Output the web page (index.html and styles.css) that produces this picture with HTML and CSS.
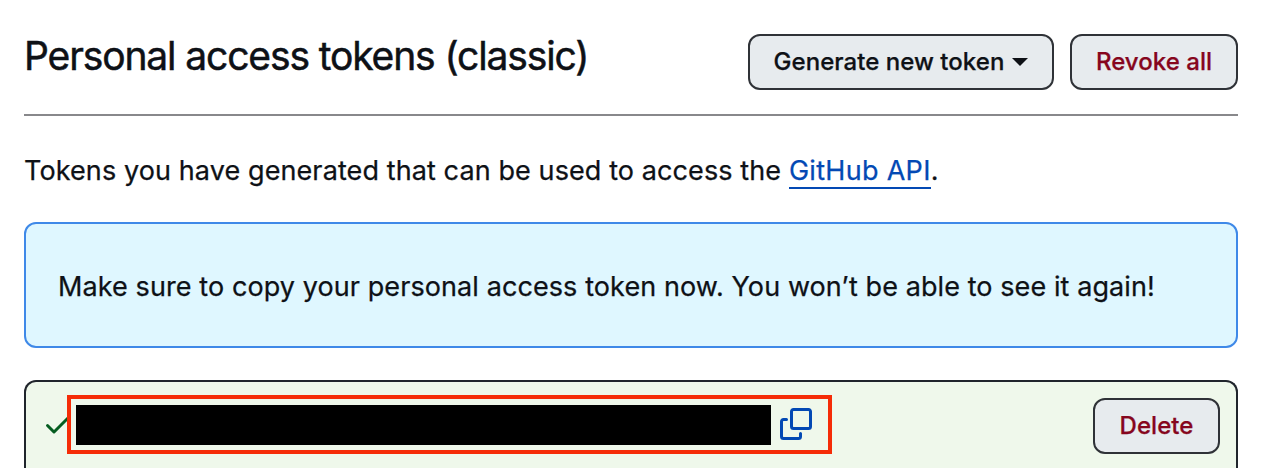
FILE: index.html
```html
<!DOCTYPE html>
<html lang="en">
<head>
<meta charset="utf-8">
<title>Personal access tokens (classic)</title>
<link rel="stylesheet" href="styles.css">
</head>
<body>
<main class="page">
  <header class="subhead">
    <h1 class="title"><span>Personal access tokens (classic)</span></h1>
    <div class="actions">
      <button class="btn btn-generate"><span>Generate new token</span><i class="caret"></i></button>
      <button class="btn btn-danger btn-revoke"><span>Revoke all</span></button>
    </div>
  </header>
  <p class="intro"><span>Tokens you have generated that can be used to access the </span><a class="link" href="#">GitHub API</a><span>.</span></p>
  <div class="flash"><span>Make sure to copy your personal access token now. You won’t be able to see it again!</span></div>
  <section class="token-row">
    <svg class="check" viewBox="0 0 16 16" width="32" height="32"><path d="M13.78 4.22a.75.75 0 0 1 0 1.06l-7.25 7.25a.75.75 0 0 1-1.06 0L2.22 9.28a.751.751 0 0 1 .018-1.042.751.751 0 0 1 1.042-.018L6 10.94l6.72-6.72a.75.75 0 0 1 1.06 0Z"/></svg>
    <div class="highlight">
      <div class="redacted"></div>
      <svg class="copy" viewBox="0 0 16 16" width="32" height="32"><path d="M0 6.75C0 5.784.784 5 1.75 5h1.5a.75.75 0 0 1 0 1.5h-1.5a.25.25 0 0 0-.25.25v7.5c0 .138.112.25.25.25h7.5a.25.25 0 0 0 .25-.25v-1.5a.75.75 0 0 1 1.5 0v1.5A1.75 1.75 0 0 1 9.25 16h-7.5A1.75 1.75 0 0 1 0 14.25Z"/><path d="M5 1.75C5 .784 5.784 0 6.75 0h7.5C15.216 0 16 .784 16 1.75v7.5A1.75 1.75 0 0 1 14.25 11h-7.5A1.75 1.75 0 0 1 5 9.25Zm1.75-.25a.25.25 0 0 0-.25.25v7.5c0 .138.112.25.25.25h7.5a.25.25 0 0 0 .25-.25v-7.5a.25.25 0 0 0-.25-.25Z"/></svg>
    </div>
    <button class="btn btn-danger btn-delete"><span>Delete</span></button>
  </section>
</main>
</body>
</html>
```
FILE: styles.css
```css
* { box-sizing: border-box; }
body {
  margin: 0;
  background: #fff;
  color: #0e1116;
  font-family: Inter, "Liberation Sans", sans-serif;
}
.page { padding: 34px 24px 0; }
.subhead {
  display: flex;
  justify-content: space-between;
  align-items: flex-start;
  height: 82px;
  border-bottom: 2px solid #88888b;
}
.title {
  margin: 0;
  font-size: 39px;
  line-height: 44px;
  font-weight: 400;
  letter-spacing: -1.13px;
  white-space: nowrap;
  -webkit-text-stroke: 0.5px;
}
.actions { display: flex; gap: 16px; }
.btn {
  display: flex;
  align-items: center;
  justify-content: center;
  gap: 8px;
  height: 56px;
  padding: 0;
  border: 2px solid #2f3237;
  border-radius: 12px;
  background: #e7ebee;
  color: #0e1116;
  font: 500 24px/36px Inter, "Liberation Sans", sans-serif;
  letter-spacing: 0.04px;
  white-space: nowrap;
  -webkit-text-stroke: 0.25px;
}
.btn-generate { width: 306px; }
.btn-revoke { width: 168px; }
.btn-delete { width: 127px; margin-top: 3px; margin-left: auto; }
.btn-danger { color: #86061d; }
.caret {
  border: 8px solid transparent;
  border-top-color: currentColor;
  border-bottom: 0;
}
.intro {
  display: flex;
  margin: 34px 0 0;
  height: 42px;
  font-size: 27px;
  line-height: 42px;
  letter-spacing: 0.1px;
  white-space: pre;
  -webkit-text-stroke: 0.25px;
}
.link {
  height: 39px;
  color: #0349b4;
  letter-spacing: 0.3px;
  text-decoration: none;
  border-bottom: 2px solid #0349b4;
}
.flash {
  display: flex;
  align-items: center;
  height: 126px;
  margin-top: 30px;
  padding: 2px 32px 0;
  border: 2px solid #3f89e8;
  border-radius: 12px;
  background: #dff7ff;
  font-size: 27px;
  letter-spacing: 0.09px;
  white-space: nowrap;
  -webkit-text-stroke: 0.25px;
}
.token-row {
  display: flex;
  align-items: flex-start;
  height: 88px;
  margin-top: 32px;
  padding: 13px 16px 0;
  border: 2px solid #20252c;
  border-bottom: 0;
  border-radius: 12px 12px 0 0;
  background: #eff8eb;
}
.check { flex: none; margin-top: 13px; fill: #055d20; }
.highlight {
  display: flex;
  align-items: center;
  gap: 9px;
  width: 765px;
  height: 59px;
  margin-left: -7px;
  padding-left: 5px;
  border: 4px solid #f52c07;
  background: #eff8eb;
  z-index: 1;
}
.redacted { width: 695px; height: 40px; margin-top: 1px; background: #000; }
.copy { margin-bottom: 1px; fill: #0349b4; }
```
